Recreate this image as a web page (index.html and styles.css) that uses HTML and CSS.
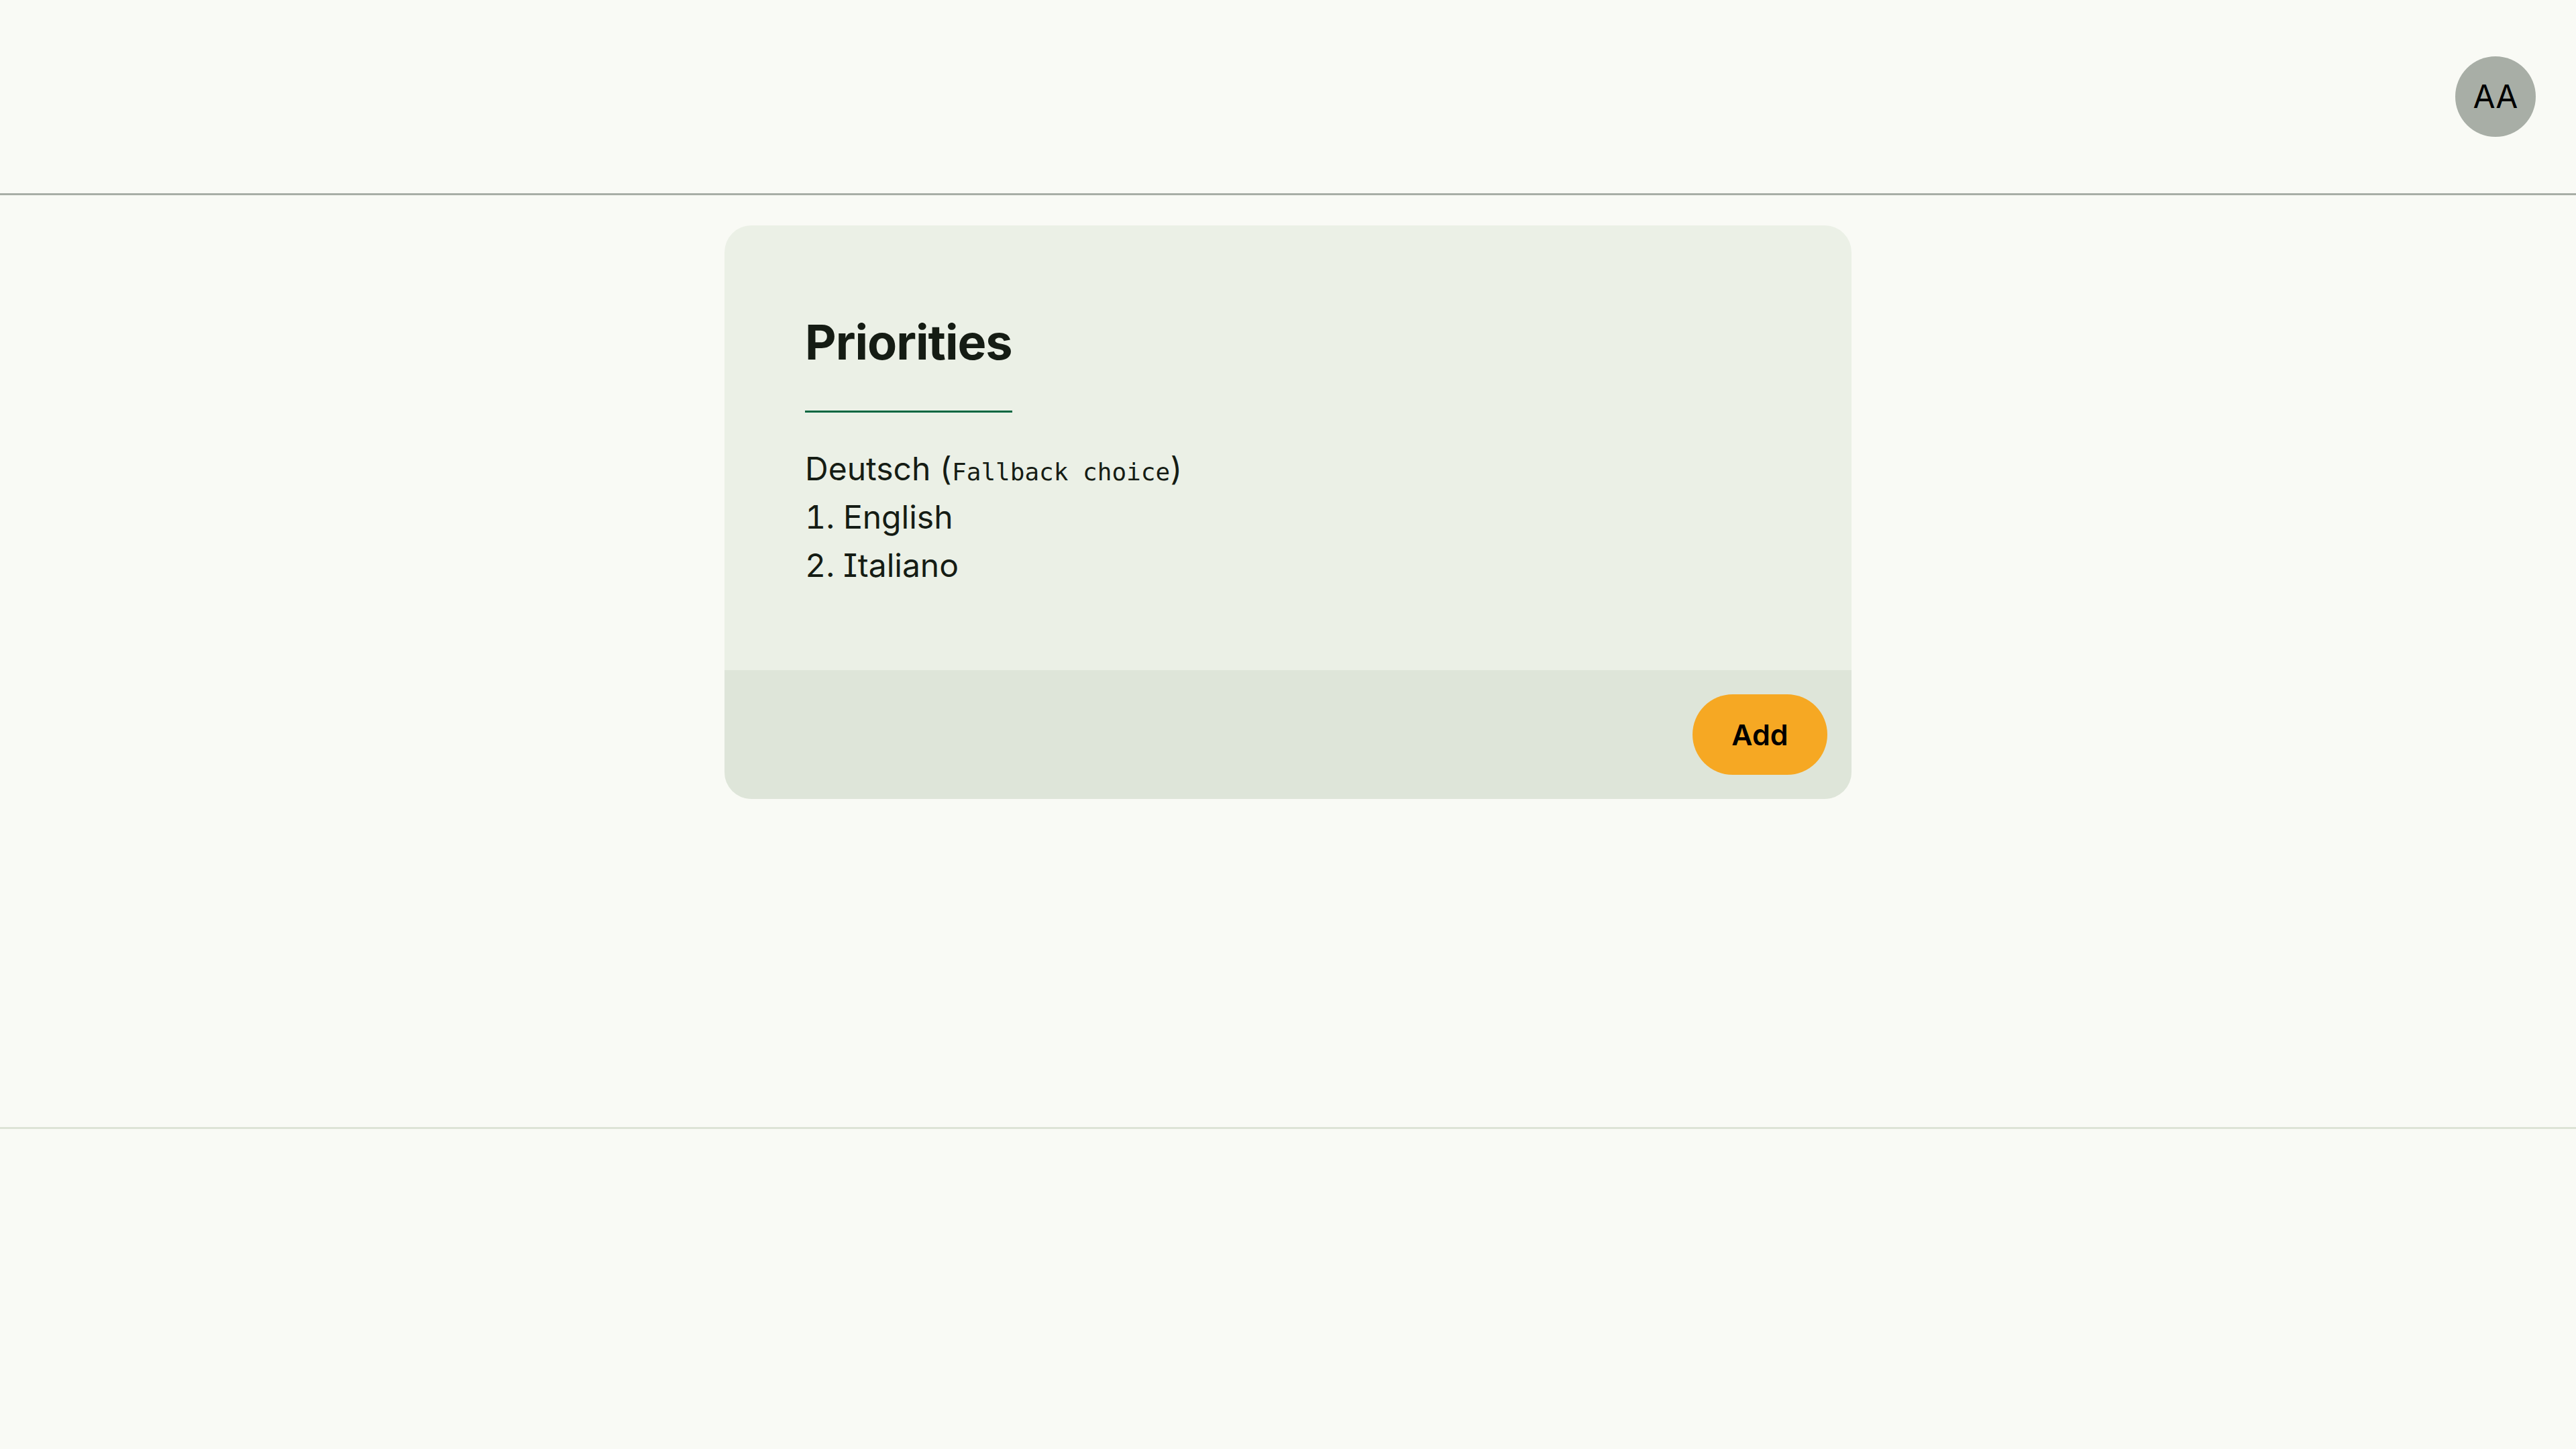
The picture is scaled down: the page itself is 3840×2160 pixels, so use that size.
FILE: index.html
```html
<!DOCTYPE html>
<html lang="en">
<head>
<meta charset="utf-8">
<title>Priorities</title>
<link rel="stylesheet" href="styles.css">
</head>
<body>
<header class="topbar">
  <div class="avatar">AA</div>
</header>
<main class="main">
  <section class="card">
    <div class="card-body">
      <h2 class="card-title">Priorities</h2>
      <ul class="prio-list">
        <li>Deutsch (<code class="mono">Fallback choice</code>)</li>
        <li>1. English</li>
        <li>2. Italiano</li>
      </ul>
    </div>
    <div class="card-footer">
      <button class="btn-add" type="button">Add</button>
    </div>
  </section>
</main>
<footer class="page-footer"></footer>
</body>
</html>
```

FILE: styles.css
```css
* { box-sizing: border-box; }
html, body {
  margin: 0;
  padding: 0;
  background: #f9faf5;
  font-family: Inter, "Noto Sans", sans-serif;
  color: #151c14;
}
.topbar {
  height: 291px;
  border-bottom: 3px solid #a8aea6;
  display: flex;
  align-items: center;
  justify-content: flex-end;
  padding-right: 60px;
}
.avatar {
  width: 120px;
  height: 120px;
  border-radius: 50%;
  background: #a8aea6;
  color: #000;
  font-size: 48px;
  display: flex;
  align-items: center;
  justify-content: center;
  line-height: 1;
}
.main {
  min-height: 1389px;
  padding-top: 45px;
  display: flex;
  flex-direction: column;
  align-items: center;
}
.card {
  width: 1680px;
  border-radius: 40px;
  overflow: hidden;
  background: #ebf0e6;
}
.card-body {
  padding: 120px;
}
.card-title {
  margin: 0 0 48px 0;
  font-size: 72px;
  font-weight: 700;
  line-height: 108px;
  letter-spacing: -1px;
  width: fit-content;
  padding-bottom: 48px;
  border-bottom: 3px solid #006640;
  color: #151c14;
}
.prio-list {
  list-style: none;
  margin: 0;
  padding: 0;
  font-size: 48px;
  line-height: 72px;
  font-feature-settings: "tnum" 1, "cv08" 1;
}
.prio-list li {
  height: 72px;
}
.mono {
  font-family: "DejaVu Sans Mono", "Liberation Mono", monospace;
  font-size: 36px;
  line-height: 1;
}
.card-footer {
  background: #dee5d9;
  padding: 36px;
  display: flex;
  justify-content: flex-end;
}
.btn-add {
  height: 120px;
  width: 201px;
  border: none;
  border-radius: 60px;
  background: #f6a823;
  color: #000;
  font-family: Inter, "Noto Sans", sans-serif;
  font-size: 43px;
  font-weight: 600;
  padding: 0;
  cursor: pointer;
}
.page-footer {
  border-top: 3px solid #dde3d6;
  height: 477px;
}
```
